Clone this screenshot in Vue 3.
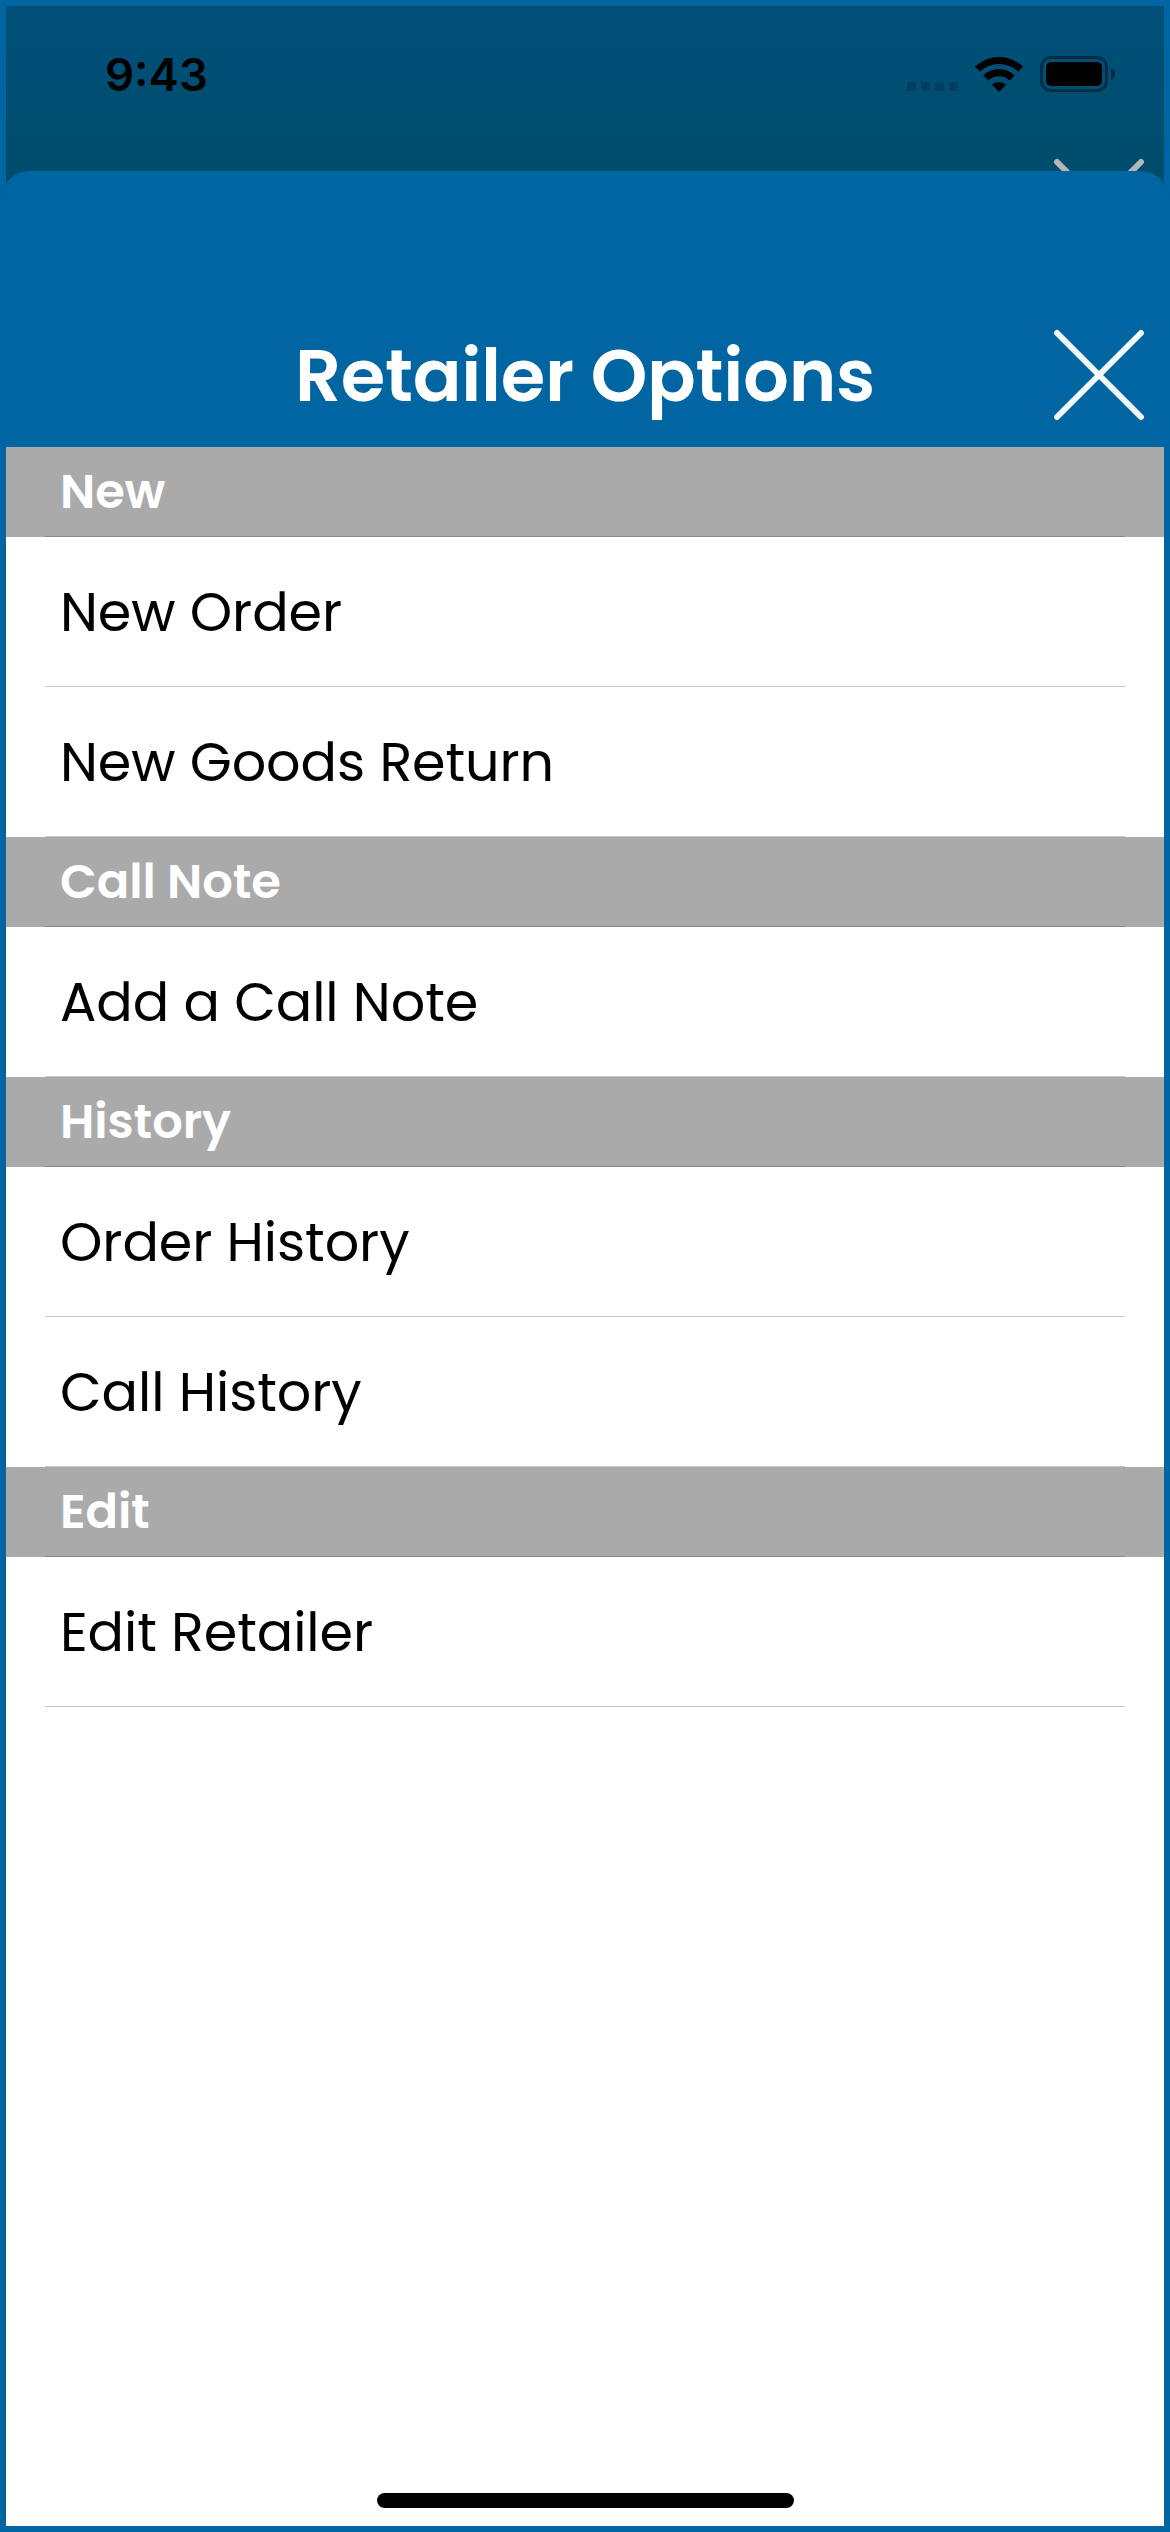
<template>
  <div class="screen">
    <div class="backdrop">
      <div class="status-bar">
        <span class="time">9:43</span>
        <div class="indicators">
          <div class="signal">
            <i v-for="n in 4" :key="n"></i>
          </div>
          <svg class="wifi" width="48" height="36" viewBox="0 0 48 36">
            <path d="M0 10.5 A35 35 0 0 1 48 10.5 L43.3 15.6 A28 28 0 0 0 4.7 15.6 Z" />
            <path d="M8.3 19.3 A23 23 0 0 1 39.7 19.3 L34.9 24.6 A16 16 0 0 0 13.1 24.6 Z" />
            <path d="M17 28.4 A11 11 0 0 1 31 28.4 L24 36 Z" />
          </svg>
          <svg class="battery" width="76" height="36" viewBox="0 0 76 36">
            <rect x="1.5" y="1.5" width="65" height="33" rx="9.5" fill="none" stroke="#000" stroke-opacity="0.4" stroke-width="3" />
            <rect x="6" y="6" width="56" height="24" rx="5" />
            <path d="M71 12 Q75 14 75 18 Q75 22 71 24 Z" fill-opacity="0.45" />
          </svg>
        </div>
      </div>
      <svg class="close-behind" width="92" height="92" viewBox="0 0 92 92">
        <path d="M4 4 L88 88 M88 4 L4 88" />
      </svg>
    </div>

    <div class="sheet">
      <header class="sheet-header">
        <h1>Retailer Options</h1>
        <button class="close" aria-label="Close">
          <svg width="92" height="92" viewBox="0 0 92 92">
            <path d="M4 4 L88 88 M88 4 L4 88" />
          </svg>
        </button>
      </header>

      <div class="list">
        <section v-for="section in sections" :key="section.title">
          <h2>{{ section.title }}</h2>
          <ul>
            <li v-for="item in section.items" :key="item">{{ item }}</li>
          </ul>
        </section>
      </div>
    </div>

    <div class="home-indicator"></div>
  </div>
</template>

<script setup>
import { ref } from 'vue';

const sections = ref([
  { title: 'New', items: ['New Order', 'New Goods Return'] },
  { title: 'Call Note', items: ['Add a Call Note'] },
  { title: 'History', items: ['Order History', 'Call History'] },
  { title: 'Edit', items: ['Edit Retailer'] },
]);
</script>

<style>
body {
  margin: 0;
}
</style>

<style scoped>
.screen {
  position: relative;
  box-sizing: border-box;
  width: 1170px;
  height: 2532px;
  border: 6px solid #0065a0;
  background: #fff;
  font-family: Poppins, Inter, sans-serif;
}
.backdrop {
  position: relative;
  height: 165px;
  margin-bottom: -30px;
  padding-bottom: 30px;
  overflow: hidden;
  background: linear-gradient(#005079, #004c6c 160px);
}
.status-bar {
  display: flex;
  justify-content: space-between;
  padding: 49px 48px 0 99px;
}
.time {
  font-family: Inter, sans-serif;
  font-size: 45.5px;
  font-weight: 600;
  line-height: 39px;
}
.indicators {
  display: flex;
  align-items: flex-start;
  padding-top: 1px;
}
.signal {
  display: flex;
  gap: 5px;
  margin: 26px 17px 0 0;
}
.signal i {
  width: 9px;
  height: 9px;
  border-radius: 2.5px;
  background: #003f5f;
}
.wifi {
  margin-right: 17px;
}
.close-behind {
  position: absolute;
  top: 152px;
  right: 19px;
  fill: none;
  stroke: #b5b8b8;
  stroke-width: 6;
  stroke-linecap: round;
}
.sheet {
  position: relative;
  margin: 0 -6px;
}
.sheet-header {
  box-sizing: border-box;
  display: flex;
  align-items: flex-end;
  justify-content: center;
  height: 276px;
  padding-bottom: 25px;
  border-radius: 30px 30px 0 0;
  background: #0065a0;
}
h1 {
  margin: 0;
  color: #fff;
  font-size: 72px;
  font-weight: 600;
  line-height: 92px;
  letter-spacing: -0.25px;
}
.close {
  position: absolute;
  top: 158px;
  right: 25px;
  padding: 0;
  border: none;
  background: none;
}
.close svg {
  display: block;
  fill: none;
  stroke: #f4f9fb;
  stroke-width: 6;
  stroke-linecap: round;
}
.list {
  margin: 0 6px;
}
h2,
li {
  position: relative;
  display: flex;
  align-items: center;
  box-sizing: border-box;
  margin: 0;
  padding: 0 54px;
  letter-spacing: -0.1px;
}
h2 {
  height: 90px;
  background: #aaa;
  color: #fff;
  font-size: 48px;
  font-weight: 600;
}
ul {
  margin: 0;
  padding: 0;
  list-style: none;
}
li {
  height: 150px;
  color: #000;
  font-size: 54px;
}
h2::after,
li::after {
  content: '';
  position: absolute;
  right: 39px;
  bottom: 0;
  left: 39px;
  height: 1px;
  background: #c8c8c8;
}
h2::after {
  background: #888;
}
.home-indicator {
  position: absolute;
  bottom: 18px;
  left: 371px;
  width: 417px;
  height: 15px;
  border-radius: 8px;
  background: #000;
}
</style>
